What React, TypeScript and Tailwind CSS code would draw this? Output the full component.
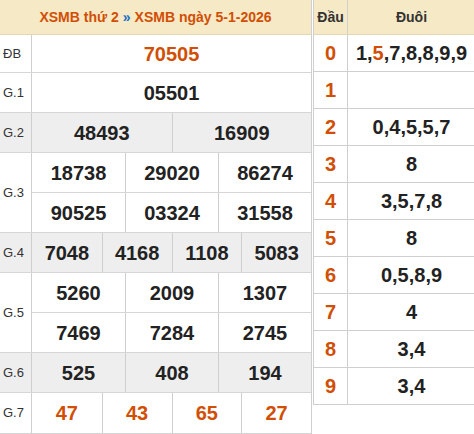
import React from "react";

const ORANGE = "text-[#d14f05]";

function Cell({ children, first, orange }: { children?: React.ReactNode; first?: boolean; orange?: boolean }) {
  return (
    <div
      className={`flex items-center justify-center text-[20px] font-bold ${orange ? ORANGE : "text-[#222]"} ${first ? "" : "border-l border-[#cfcfcf]"}`}
    >
      {children}
    </div>
  );
}

function Row({
  label,
  gray,
  h,
  children,
}: {
  label: string;
  gray?: boolean;
  h: string;
  children: React.ReactNode;
}) {
  return (
    <div className={`flex border-b border-[#d6d6d6] ${gray ? "bg-[#eeeeee]" : "bg-white"} ${h}`}>
      <div className="w-[32px] shrink-0 border-r border-[#cfcfcf] flex items-center pl-[3px] text-[13px] text-[#333]">
        {label}
      </div>
      <div className="flex-1 flex flex-col">{children}</div>
    </div>
  );
}

function Grid({ cols, items, orange, last }: { cols: number; items: string[]; orange?: boolean; last?: boolean }) {
  const gc = cols === 1 ? "grid-cols-1" : cols === 2 ? "grid-cols-2" : cols === 3 ? "grid-cols-3" : "grid-cols-4";
  return (
    <div className={`grid ${gc} flex-1 ${last === false ? "border-b border-[#d6d6d6]" : ""}`}>
      {items.map((t, i) => (
        <Cell key={i} first={i === 0} orange={orange}>
          {t}
        </Cell>
      ))}
    </div>
  );
}

const dauduoi: [string, React.ReactNode][] = [
  ["0", <>1,<span className={ORANGE}>5</span>,7,8,8,9,9</>],
  ["1", ""],
  ["2", "0,4,5,5,7"],
  ["3", "8"],
  ["4", "3,5,7,8"],
  ["5", "8"],
  ["6", "0,5,8,9"],
  ["7", "4"],
  ["8", "3,4"],
  ["9", "3,4"],
];

export default function App() {
  return (
    <div
      className="w-[474px] h-[434px] overflow-hidden bg-white flex items-start"
      style={{ fontFamily: '"Liberation Sans", Arial, sans-serif' }}
    >
      {/* Left table */}
      <div className="w-[312px] shrink-0 border-r border-[#cfcfcf] flex flex-col">
        <div className="h-[35px] bg-[#f6e9c6] border-b border-[#e2d6b4] flex items-center justify-center text-[14px] font-bold">
          <span className={ORANGE}>XSMB thứ 2</span>
          <span className="text-[#1a6fc9] mx-[4px]">»</span>
          <span className={ORANGE}>XSMB ngày 5-1-2026</span>
        </div>
        <Row label="ĐB" h="h-[38px]">
          <Grid cols={1} items={["70505"]} orange />
        </Row>
        <Row label="G.1" h="h-[40px]">
          <Grid cols={1} items={["05501"]} />
        </Row>
        <Row label="G.2" gray h="h-[40px]">
          <Grid cols={2} items={["48493", "16909"]} />
        </Row>
        <Row label="G.3" h="h-[80px]">
          <Grid cols={3} items={["18738", "29020", "86274"]} last={false} />
          <Grid cols={3} items={["90525", "03324", "31558"]} />
        </Row>
        <Row label="G.4" gray h="h-[40px]">
          <Grid cols={4} items={["7048", "4168", "1108", "5083"]} />
        </Row>
        <Row label="G.5" h="h-[80px]">
          <Grid cols={3} items={["5260", "2009", "1307"]} last={false} />
          <Grid cols={3} items={["7469", "7284", "2745"]} />
        </Row>
        <Row label="G.6" gray h="h-[40px]">
          <Grid cols={3} items={["525", "408", "194"]} />
        </Row>
        <Row label="G.7" h="h-[41px]">
          <Grid cols={4} items={["47", "43", "65", "27"]} orange />
        </Row>
      </div>

      {/* Right table */}
      <div className="ml-[1px] w-[164px] shrink-0 border-l border-[#cfcfcf] flex flex-col">
        <div className="h-[35px] bg-[#f6e9c6] border-b border-[#e2d6b4] flex text-[14px] font-bold text-[#333]">
          <div className="w-[34px] border-r border-[#cfcfcf] flex items-center justify-center">Đầu</div>
          <div className="flex-1 flex items-center justify-center pr-[2px]">Đuôi</div>
        </div>
        {dauduoi.map(([d, v]) => (
          <div key={d} className="h-[37px] flex border-b border-[#cfcfcf] text-[20px] font-bold">
            <div className={`w-[34px] border-r border-[#cfcfcf] flex items-center justify-center ${ORANGE}`}>{d}</div>
            <div className="flex-1 flex items-center justify-center text-[#222] pr-[2px]">{v}</div>
          </div>
        ))}
      </div>
    </div>
  );
}
